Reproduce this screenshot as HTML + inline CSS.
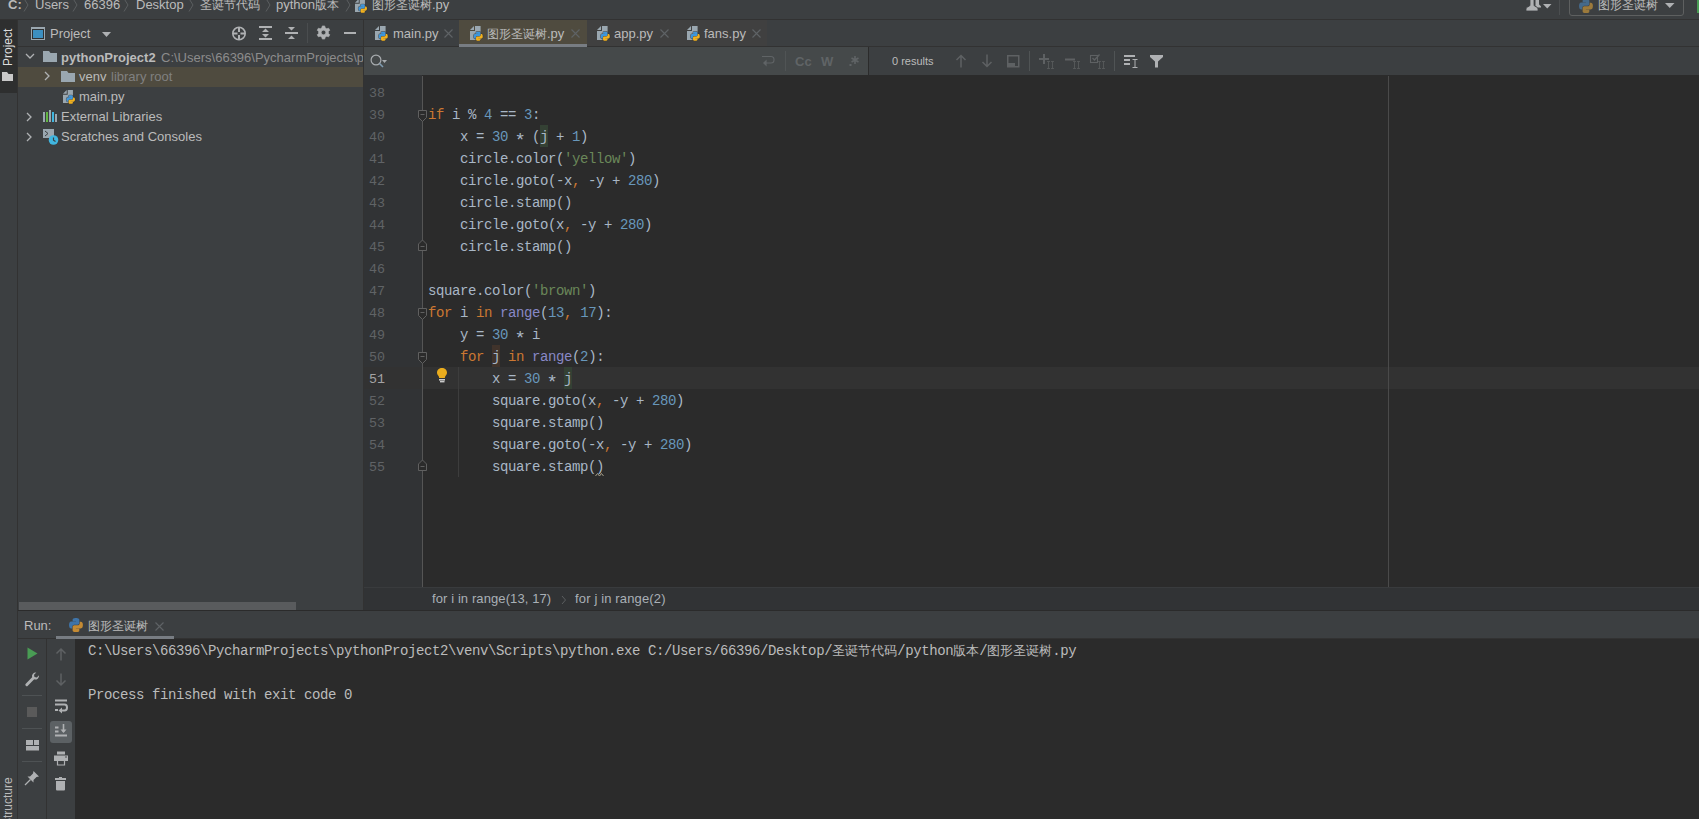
<!DOCTYPE html>
<html><head><meta charset="utf-8">
<style>
*{margin:0;padding:0;box-sizing:border-box}
html,body{width:1699px;height:819px;overflow:hidden;background:#3C3F41}
body{position:relative;font-family:"Liberation Sans",sans-serif;font-size:13px;color:#BBBBBB}
.a{position:absolute}
.t{position:absolute;white-space:nowrap;line-height:16px}
.mono{font-family:"Liberation Mono",monospace;font-size:13.333px}
.bd{background:#323232}
svg{position:absolute;overflow:visible}
/* code */
.ln{position:absolute;left:369px;width:16px;padding-top:2px;font-size:13.333px!important;letter-spacing:0;text-align:right;color:#606366;line-height:22px;height:22px}
.cl{position:absolute;left:428px;padding-top:1px;font-size:14px!important;letter-spacing:-0.4px;color:#A9B7C6;line-height:22px;height:22px;white-space:pre}
.k{color:#CC7832}.b{color:#8888C6}.hw{background:#344134}.hr{background:#40332B}.n{color:#6897BB}.s{color:#6A8759}
.cj{font-size:12px}
.ast{display:inline-block;width:8px;text-align:center;transform:translateY(3.5px) scale(1.35)}
</style></head><body>
<svg width="0" height="0" style="position:absolute">
<defs>
<symbol id="pyfile" viewBox="0 0 16 16">
<path d="M0 5L4 1V5Z" fill="#9AA7B0"/>
<path d="M5 1H10.6V15H0V6H5Z" fill="#9AA7B0"/>
<svg x="3" y="6" width="10.5" height="10.5" viewBox="-8 -8 127 127"><path d="M54.9 0C50.3 0 45.9.4 42.1 1.1 30.8 3.1 28.8 7.3 28.8 15V25.2H55.4V28.6H18.8C11.1 28.6 4.3 33.2 2.2 42-.2 52.1-.3 58.4 2.2 68.9 4.1 76.8 8.6 82.4 16.3 82.4H25.5V70.2C25.5 61.4 33.1 53.6 42.1 53.6H68.6C76 53.6 81.9 47.5 81.9 40.1V15C81.9 7.9 75.8 2.5 68.6 1.1 64 .4 59.3 0 54.9 0Z" fill="#333" stroke="#333" stroke-width="16" opacity="0.6"/><path d="M54.9 0C50.3 0 45.9.4 42.1 1.1 30.8 3.1 28.8 7.3 28.8 15V25.2H55.4V28.6H18.8C11.1 28.6 4.3 33.2 2.2 42-.2 52.1-.3 58.4 2.2 68.9 4.1 76.8 8.6 82.4 16.3 82.4H25.5V70.2C25.5 61.4 33.1 53.6 42.1 53.6H68.6C76 53.6 81.9 47.5 81.9 40.1V15C81.9 7.9 75.8 2.5 68.6 1.1 64 .4 59.3 0 54.9 0Z" transform="rotate(180 55.3 55.6)" fill="#333" stroke="#333" stroke-width="16" opacity="0.6"/><path d="M54.9 0C50.3 0 45.9.4 42.1 1.1 30.8 3.1 28.8 7.3 28.8 15V25.2H55.4V28.6H18.8C11.1 28.6 4.3 33.2 2.2 42-.2 52.1-.3 58.4 2.2 68.9 4.1 76.8 8.6 82.4 16.3 82.4H25.5V70.2C25.5 61.4 33.1 53.6 42.1 53.6H68.6C76 53.6 81.9 47.5 81.9 40.1V15C81.9 7.9 75.8 2.5 68.6 1.1 64 .4 59.3 0 54.9 0Z" fill="#3E96DB"/><path d="M54.9 0C50.3 0 45.9.4 42.1 1.1 30.8 3.1 28.8 7.3 28.8 15V25.2H55.4V28.6H18.8C11.1 28.6 4.3 33.2 2.2 42-.2 52.1-.3 58.4 2.2 68.9 4.1 76.8 8.6 82.4 16.3 82.4H25.5V70.2C25.5 61.4 33.1 53.6 42.1 53.6H68.6C76 53.6 81.9 47.5 81.9 40.1V15C81.9 7.9 75.8 2.5 68.6 1.1 64 .4 59.3 0 54.9 0Z" transform="rotate(180 55.3 55.6)" fill="#F2B11C"/></svg>
</symbol>
<symbol id="pylogo2" viewBox="-8 -8 127 127"><path d="M54.9 0C50.3 0 45.9.4 42.1 1.1 30.8 3.1 28.8 7.3 28.8 15V25.2H55.4V28.6H18.8C11.1 28.6 4.3 33.2 2.2 42-.2 52.1-.3 58.4 2.2 68.9 4.1 76.8 8.6 82.4 16.3 82.4H25.5V70.2C25.5 61.4 33.1 53.6 42.1 53.6H68.6C76 53.6 81.9 47.5 81.9 40.1V15C81.9 7.9 75.8 2.5 68.6 1.1 64 .4 59.3 0 54.9 0Z" fill="#456A8C"/><path d="M54.9 0C50.3 0 45.9.4 42.1 1.1 30.8 3.1 28.8 7.3 28.8 15V25.2H55.4V28.6H18.8C11.1 28.6 4.3 33.2 2.2 42-.2 52.1-.3 58.4 2.2 68.9 4.1 76.8 8.6 82.4 16.3 82.4H25.5V70.2C25.5 61.4 33.1 53.6 42.1 53.6H68.6C76 53.6 81.9 47.5 81.9 40.1V15C81.9 7.9 75.8 2.5 68.6 1.1 64 .4 59.3 0 54.9 0Z" transform="rotate(180 55.3 55.6)" fill="#9C7A3C"/></symbol>
<symbol id="pylogo3" viewBox="-8 -8 127 127"><path d="M54.9 0C50.3 0 45.9.4 42.1 1.1 30.8 3.1 28.8 7.3 28.8 15V25.2H55.4V28.6H18.8C11.1 28.6 4.3 33.2 2.2 42-.2 52.1-.3 58.4 2.2 68.9 4.1 76.8 8.6 82.4 16.3 82.4H25.5V70.2C25.5 61.4 33.1 53.6 42.1 53.6H68.6C76 53.6 81.9 47.5 81.9 40.1V15C81.9 7.9 75.8 2.5 68.6 1.1 64 .4 59.3 0 54.9 0Z" fill="#3F74A8"/><path d="M54.9 0C50.3 0 45.9.4 42.1 1.1 30.8 3.1 28.8 7.3 28.8 15V25.2H55.4V28.6H18.8C11.1 28.6 4.3 33.2 2.2 42-.2 52.1-.3 58.4 2.2 68.9 4.1 76.8 8.6 82.4 16.3 82.4H25.5V70.2C25.5 61.4 33.1 53.6 42.1 53.6H68.6C76 53.6 81.9 47.5 81.9 40.1V15C81.9 7.9 75.8 2.5 68.6 1.1 64 .4 59.3 0 54.9 0Z" transform="rotate(180 55.3 55.6)" fill="#C48A33"/></symbol>
</defs>
</svg>

<!-- ================= TOP NAV BAR ================= -->
<div class="a" style="left:0;top:0;width:1699px;height:19px;background:#3C3F41"></div>
<div class="a bd" style="left:0;top:19px;width:1699px;height:1px"></div>
<div class="t" style="left:8px;top:-3px;font-weight:bold">C:</div>
<div class="t" style="left:35px;top:-3px">Users</div>
<div class="t" style="left:84px;top:-3px">66396</div>
<div class="t" style="left:136px;top:-3px">Desktop</div>
<div class="t" style="left:200px;top:-3px;font-size:12px"><span class="cj">圣诞节代码</span></div>
<div class="t" style="left:276px;top:-3px">python<span class="cj">版本</span></div>
<svg style="left:355px;top:-2px" width="15" height="15"><use href="#pyfile"/></svg>
<div class="t" style="left:372px;top:-3px"><span class="cj">图形圣诞树</span>.py</div>

<svg style="left:23px;top:0px" width="7" height="13"><path d="M1 -1.5L5 5L1 11.5" fill="none" stroke="#5B5E60" stroke-width="1"/></svg>
<svg style="left:72px;top:0px" width="7" height="13"><path d="M1 -1.5L5 5L1 11.5" fill="none" stroke="#5B5E60" stroke-width="1"/></svg>
<svg style="left:123px;top:0px" width="7" height="13"><path d="M1 -1.5L5 5L1 11.5" fill="none" stroke="#5B5E60" stroke-width="1"/></svg>
<svg style="left:188px;top:0px" width="7" height="13"><path d="M1 -1.5L5 5L1 11.5" fill="none" stroke="#5B5E60" stroke-width="1"/></svg>
<svg style="left:265px;top:0px" width="7" height="13"><path d="M1 -1.5L5 5L1 11.5" fill="none" stroke="#5B5E60" stroke-width="1"/></svg>
<svg style="left:345px;top:0px" width="7" height="13"><path d="M1 -1.5L5 5L1 11.5" fill="none" stroke="#5B5E60" stroke-width="1"/></svg>
<svg style="left:1525px;top:0px" width="16" height="11"><path d="M9.5 0H14V3.5Q14 4.5 14.5 5L15.5 5.8Q16 6.3 16 7V7.6H12.5L10.5 6V0Z" fill="#AFB1B3"/><path d="M5 -2H9V4.5Q9 5.5 9.5 6L12 7.3Q13 7.8 13 9V11H1V9Q1 7.8 2 7.3L4.5 6Q5 5.5 5 4.5Z" fill="#AFB1B3" stroke="#3C3F41" stroke-width="0.8"/></svg>
<svg style="left:1543px;top:4px" width="9" height="5"><path d="M0 0H8.5L4.25 4.5Z" fill="#AFB1B3"/></svg>
<div class="a" style="left:1559px;top:0;width:1px;height:15px;background:#4B4E50"></div>
<div class="a" style="left:1569px;top:-6px;width:115px;height:22px;border:1px solid #5E6060;border-radius:3px"></div>
<svg style="left:1578px;top:-2px" width="16" height="16"><use href="#pylogo2"/></svg>
<div class="t" style="left:1598px;top:-3px"><span class="cj">图形圣诞树</span></div>
<svg style="left:1665px;top:3px" width="10" height="6"><path d="M0 0H9.5L4.75 5Z" fill="#AFB1B3"/></svg>
<div class="a" style="left:1697px;top:0;width:2px;height:13px;background:#499C54"></div>
<!-- ================= LEFT STRIPE ================= -->
<div class="a" style="left:0;top:20px;width:17px;height:799px;background:#3C3F41"></div>
<div class="a bd" style="left:17px;top:20px;width:1px;height:799px"></div>
<div class="a" style="left:0;top:20px;width:17px;height:73px;background:#2E2F2F"></div>
<div class="t" style="left:0px;top:66px;transform-origin:0 0;transform:rotate(-90deg);font-size:12px;color:#DDDDDD">Project</div>
<svg style="left:2px;top:72px" width="12" height="10"><path d="M0 0H5L6.5 2H11V9H0Z" fill="#C9C9C9"/></svg>
<div class="t" style="left:0px;top:826px;transform-origin:0 0;transform:rotate(-90deg);font-size:12px">Structure</div>

<!-- ================= PROJECT PANEL ================= -->
<div class="a" style="left:18px;top:20px;width:345px;height:26px;background:#3C3F41"></div>
<div class="a bd" style="left:18px;top:46px;width:345px;height:1px"></div>
<svg style="left:31px;top:27px" width="14" height="13"><rect x="0" y="0" width="14" height="13" fill="#9AA7B0"/><rect x="1" y="2" width="12" height="10" fill="#2F3132"/><rect x="2" y="3" width="10" height="8" fill="#3C8FC0"/></svg>
<div class="t" style="left:50px;top:26px">Project</div>
<svg style="left:102px;top:32px" width="9" height="5"><path d="M0 0H9L4.5 5Z" fill="#AFB1B3"/></svg>
<svg style="left:231px;top:26px" width="16" height="15" viewBox="0 0 16 15"><circle cx="8" cy="7.5" r="6.2" fill="none" stroke="#AFB1B3" stroke-width="1.6"/><path d="M8 1.5V6M8 9V13.5M2 7.5H6.5M9.5 7.5H14" stroke="#AFB1B3" stroke-width="2"/></svg>
<svg style="left:259px;top:26px" width="13" height="14"><rect x="0" y="0" width="13" height="2" fill="#AFB1B3"/><rect x="0" y="12" width="13" height="2" fill="#AFB1B3"/><path d="M3 6H10L6.5 2.5Z M3 8H10L6.5 11.5Z" fill="#AFB1B3"/></svg>
<svg style="left:285px;top:26px" width="13" height="14"><rect x="0" y="6" width="13" height="2" fill="#AFB1B3"/><path d="M3 1H10L6.5 4.5Z M3 13H10L6.5 9.5Z" fill="#AFB1B3"/></svg>
<div class="a" style="left:307px;top:23px;width:1px;height:20px;background:#4A4D4F"></div>
<svg style="left:317px;top:26px" width="13" height="13"><path fill="#AFB1B3" fill-rule="evenodd" stroke="#AFB1B3" stroke-width="0.6" stroke-linejoin="round" d="M5.31 -0.09 L7.69 -0.09 L8.19 1.80 L9.73 2.68 L11.62 2.18 L12.80 4.23 L11.42 5.61 L11.42 7.39 L12.80 8.77 L11.62 10.82 L9.73 10.32 L8.19 11.20 L7.69 13.09 L5.31 13.09 L4.81 11.20 L3.27 10.32 L1.38 10.82 L0.20 8.77 L1.58 7.39 L1.58 5.61 L0.20 4.23 L1.38 2.18 L3.27 2.68 L4.81 1.80Z M6.5 4.2 A2.3 2.3 0 1 0 6.5 8.8 A2.3 2.3 0 1 0 6.5 4.2Z"/></svg>
<div class="a" style="left:344px;top:32px;width:12px;height:2px;background:#AFB1B3"></div>

<!-- tree -->
<div class="a" style="left:18px;top:67px;width:345px;height:20px;background:#4F4B3F"></div>
<svg style="left:25px;top:53px" width="10" height="7"><path d="M1 1L5 5L9 1" fill="none" stroke="#AFB1B3" stroke-width="1.3"/></svg>
<svg style="left:43px;top:51px" width="15" height="12"><path d="M0 0H6L7.5 2H14V11H0Z" fill="#9AA7B0"/></svg>
<div class="t" style="left:61px;top:50px;font-weight:bold;color:#BBBBBB">pythonProject2</div>
<div class="t" style="left:161px;top:50px;color:#8C8C8C">C:\Users\66396\PycharmProjects\pythonProject2</div>
<svg style="left:44px;top:71px" width="7" height="10"><path d="M1 1L5 5L1 9" fill="none" stroke="#AFB1B3" stroke-width="1.3"/></svg>
<svg style="left:61px;top:71px" width="15" height="12"><path d="M0 0H6L7.5 2H14V11H0Z" fill="#9AA7B0"/></svg>
<div class="t" style="left:79px;top:69px">venv</div>
<div class="t" style="left:111px;top:69px;color:#808080">library root</div>
<svg style="left:63px;top:89px" width="15" height="15"><use href="#pyfile"/></svg>
<div class="t" style="left:79px;top:89px">main.py</div>
<svg style="left:26px;top:112px" width="7" height="10"><path d="M1 1L5 5L1 9" fill="none" stroke="#AFB1B3" stroke-width="1.3"/></svg>
<svg style="left:43px;top:110px" width="15" height="13"><rect x="0" y="2" width="2" height="10" fill="#9AA7B0"/><rect x="3" y="2" width="2" height="10" fill="#62B543"/><rect x="6" y="0" width="2" height="12" fill="#9AA7B0"/><rect x="9" y="2" width="2" height="10" fill="#40B6E0"/><rect x="12" y="4" width="2" height="8" fill="#9AA7B0"/></svg>
<div class="t" style="left:61px;top:109px">External Libraries</div>
<svg style="left:26px;top:132px" width="7" height="10"><path d="M1 1L5 5L1 9" fill="none" stroke="#AFB1B3" stroke-width="1.3"/></svg>
<svg style="left:43px;top:129px" width="16" height="16"><rect x="0" y="0" width="11" height="9" fill="#9AA7B0"/><path d="M2 2L5 4.5L2 7" fill="none" stroke="#3C3F41" stroke-width="1"/><circle cx="10.5" cy="11" r="4.8" fill="#40B6E0"/><path d="M10.5 8.5V11.2L12.5 12.5" fill="none" stroke="#3C3F41" stroke-width="1.2"/></svg>
<div class="t" style="left:61px;top:129px">Scratches and Consoles</div>
<!-- project h scrollbar -->
<div class="a" style="left:19px;top:602px;width:277px;height:8px;background:#595B5D"></div>

<!-- ================= EDITOR ================= -->
<div class="a bd" style="left:363px;top:20px;width:1px;height:591px"></div>
<div class="a bd" style="left:364px;top:46px;width:1335px;height:1px"></div>
<div class="a" style="left:364px;top:47px;width:504px;height:28px;background:#45494A"></div>
<div class="a" style="left:364px;top:75px;width:58px;height:512px;background:#313335"></div>
<div class="a" style="left:422px;top:75px;width:1277px;height:512px;background:#2B2B2B"></div>
<div class="a" style="left:364px;top:587px;width:1335px;height:23px;background:#313335"></div>

<!-- tabs -->
<div class="a" style="left:459px;top:20px;width:128px;height:26px;background:#4F4B3F"></div>
<div class="a" style="left:587px;top:20px;width:180px;height:26px;background:#404040"></div>
<div class="a" style="left:459px;top:44px;width:128px;height:3px;background:#787D83"></div>
<svg style="left:375px;top:25px" width="16" height="16"><use href="#pyfile"/></svg>
<div class="t" style="left:393px;top:26px">main.py</div>
<svg style="left:444px;top:29px" width="9" height="9"><path d="M0.5 0.5L8.5 8.5M8.5 0.5L0.5 8.5" stroke="#5F6366" stroke-width="1.1"/></svg>
<svg style="left:470px;top:25px" width="16" height="16"><use href="#pyfile"/></svg>
<div class="t" style="left:487px;top:26px"><span class="cj">图形圣诞树</span>.py</div>
<svg style="left:571px;top:29px" width="9" height="9"><path d="M0.5 0.5L8.5 8.5M8.5 0.5L0.5 8.5" stroke="#5F6366" stroke-width="1.1"/></svg>
<svg style="left:597px;top:25px" width="16" height="16"><use href="#pyfile"/></svg>
<div class="t" style="left:614px;top:26px">app.py</div>
<svg style="left:660px;top:29px" width="9" height="9"><path d="M0.5 0.5L8.5 8.5M8.5 0.5L0.5 8.5" stroke="#5F6366" stroke-width="1.1"/></svg>
<svg style="left:687px;top:25px" width="16" height="16"><use href="#pyfile"/></svg>
<div class="t" style="left:704px;top:26px">fans.py</div>
<svg style="left:752px;top:29px" width="9" height="9"><path d="M0.5 0.5L8.5 8.5M8.5 0.5L0.5 8.5" stroke="#5F6366" stroke-width="1.1"/></svg>
<!-- find bar -->
<div class="a" style="left:868px;top:47px;width:1px;height:28px;background:#2B2B2B"></div>
<svg style="left:370px;top:54px" width="20" height="15"><circle cx="6" cy="6" r="4.9" fill="none" stroke="#A8ACAF" stroke-width="1.2"/><path d="M9.5 9.5L13 13" stroke="#7F9BB0" stroke-width="1.6"/><path d="M12 6H17L14.5 9Z" fill="#A8ACAF"/></svg>
<svg style="left:762px;top:55px" width="14" height="13"><path d="M0 1.5H9Q12 1.5 12 4.7Q12 8 9 8H3.5" fill="none" stroke="#606466" stroke-width="1.1"/><path d="M1 8L4.6 4.6V11.4Z" fill="#606466"/></svg>
<div class="a" style="left:785px;top:51px;width:1px;height:20px;background:#505455"></div>
<div class="t" style="left:795px;top:54px;font-weight:bold;font-size:13px;color:#606466">Cc</div>
<div class="t" style="left:821px;top:54px;font-weight:bold;font-size:13px;color:#606466">W</div>
<svg style="left:848px;top:54px" width="13" height="14"><rect x="1.5" y="10" width="2" height="2" fill="#606466"/><path d="M7 2V10M3.5 4L10.5 8M10.5 4L3.5 8" stroke="#606466" stroke-width="1.6"/></svg>
<div class="t" style="left:892px;top:53px;font-size:11px;color:#BBBBBB">0 results</div>
<svg style="left:955px;top:54px" width="12" height="14"><path d="M6 1.5V13.5M1.5 6L6 1.5L10.5 6" fill="none" stroke="#5E6163" stroke-width="1.5"/></svg>
<svg style="left:981px;top:54px" width="12" height="14"><path d="M6 0.5V12.5M1.5 8L6 12.5L10.5 8" fill="none" stroke="#5E6163" stroke-width="1.5"/></svg>
<svg style="left:1007px;top:55px" width="13" height="13"><rect x="0.75" y="0.75" width="11" height="11" fill="none" stroke="#5E6163" stroke-width="1.5"/><rect x="1" y="8" width="7" height="3.5" fill="#5E6163"/></svg>
<div class="a" style="left:1029px;top:51px;width:1px;height:20px;background:#505455"></div>
<svg style="left:1039px;top:53px" width="16" height="16"><path d="M5 1V11M0 6H10" stroke="#5E6163" stroke-width="2"/><path d="M8 8.5H11M8 15.5H11M9.5 8.5V15.5M12 8.5H15M12 15.5H15M13.5 8.5V15.5" stroke="#5E6163" stroke-width="0.7"/></svg>
<svg style="left:1065px;top:53px" width="16" height="16"><path d="M0 6.5H10" stroke="#5E6163" stroke-width="2"/><path d="M8 8.5H11M8 15.5H11M9.5 8.5V15.5M12 8.5H15M12 15.5H15M13.5 8.5V15.5" stroke="#5E6163" stroke-width="0.7"/></svg>
<svg style="left:1090px;top:53px" width="16" height="16"><rect x="0.5" y="2.5" width="7" height="7" fill="none" stroke="#5E6163" stroke-width="1.1"/><path d="M2.5 5L4.5 7L9.5 1.5" fill="none" stroke="#5E6163" stroke-width="1.3"/><path d="M8 8.5H11M8 15.5H11M9.5 8.5V15.5M12 8.5H15M12 15.5H15M13.5 8.5V15.5" stroke="#5E6163" stroke-width="0.7"/></svg>
<div class="a" style="left:1114px;top:51px;width:1px;height:20px;background:#505455"></div>
<svg style="left:1124px;top:55px" width="15" height="13"><rect x="0" y="0" width="11" height="2" fill="#AFB1B3"/><rect x="0" y="4" width="6" height="2" fill="#AFB1B3"/><rect x="0" y="8" width="6" height="2" fill="#AFB1B3"/><path d="M8.5 4.5H13.5M8.5 12.5H13.5M11 4.5V12.5" stroke="#AFB1B3" stroke-width="1"/></svg>
<svg style="left:1150px;top:55px" width="14" height="13"><path d="M0 0H13V2L8 6.5V12.5H5V6.5L0 2Z" fill="#AFB1B3"/></svg>
<!-- code -->
<div class="a" style="left:364px;top:367px;width:1335px;height:22px;background:#323232"></div>
<div class="a" style="left:540px;top:125px;width:8px;height:22px;background:#344134"></div>
<div class="a" style="left:492px;top:345px;width:8px;height:22px;background:#40332B"></div>
<div class="a" style="left:564px;top:367px;width:8px;height:22px;background:#344134"></div>

<div class="a" style="left:1388px;top:76px;width:1px;height:511px;background:#4A4A4A"></div>
<div class="a" style="left:422px;top:76px;width:1px;height:511px;background:#555555"></div>
<div class="a" style="left:458px;top:367px;width:1px;height:110px;background:#3D3D3D"></div>
<div class="ln mono" style="top:81px;color:#606366">38</div>
<div class="ln mono" style="top:103px;color:#606366">39</div>
<div class="cl mono" style="top:103px"><span class="k">if</span> i % <span class="n">4</span> == <span class="n">3</span>:</div>
<div class="ln mono" style="top:125px;color:#606366">40</div>
<div class="cl mono" style="top:125px">    x = <span class="n">30</span> <span class="ast">*</span> (j + <span class="n">1</span>)</div>
<div class="ln mono" style="top:147px;color:#606366">41</div>
<div class="cl mono" style="top:147px">    circle.color(<span class="s">'yellow'</span>)</div>
<div class="ln mono" style="top:169px;color:#606366">42</div>
<div class="cl mono" style="top:169px">    circle.goto(-x<span class="k">,</span> -y + <span class="n">280</span>)</div>
<div class="ln mono" style="top:191px;color:#606366">43</div>
<div class="cl mono" style="top:191px">    circle.stamp()</div>
<div class="ln mono" style="top:213px;color:#606366">44</div>
<div class="cl mono" style="top:213px">    circle.goto(x<span class="k">,</span> -y + <span class="n">280</span>)</div>
<div class="ln mono" style="top:235px;color:#606366">45</div>
<div class="cl mono" style="top:235px">    circle.stamp()</div>
<div class="ln mono" style="top:257px;color:#606366">46</div>
<div class="ln mono" style="top:279px;color:#606366">47</div>
<div class="cl mono" style="top:279px">square.color(<span class="s">'brown'</span>)</div>
<div class="ln mono" style="top:301px;color:#606366">48</div>
<div class="cl mono" style="top:301px"><span class="k">for</span> i <span class="k">in</span> <span class="b">range</span>(<span class="n">13</span><span class="k">,</span> <span class="n">17</span>):</div>
<div class="ln mono" style="top:323px;color:#606366">49</div>
<div class="cl mono" style="top:323px">    y = <span class="n">30</span> <span class="ast">*</span> i</div>
<div class="ln mono" style="top:345px;color:#606366">50</div>
<div class="cl mono" style="top:345px">    <span class="k">for</span> j <span class="k">in</span> <span class="b">range</span>(<span class="n">2</span>):</div>
<div class="ln mono" style="top:367px;color:#A4A3A3">51</div>
<div class="cl mono" style="top:367px">        x = <span class="n">30</span> <span class="ast">*</span> j</div>
<div class="ln mono" style="top:389px;color:#606366">52</div>
<div class="cl mono" style="top:389px">        square.goto(x<span class="k">,</span> -y + <span class="n">280</span>)</div>
<div class="ln mono" style="top:411px;color:#606366">53</div>
<div class="cl mono" style="top:411px">        square.stamp()</div>
<div class="ln mono" style="top:433px;color:#606366">54</div>
<div class="cl mono" style="top:433px">        square.goto(-x<span class="k">,</span> -y + <span class="n">280</span>)</div>
<div class="ln mono" style="top:455px;color:#606366">55</div>
<div class="cl mono" style="top:455px">        square.stamp()</div>
<svg style="left:0;top:0" width="1" height="1"><path d="M418.5 110.5H426.5V117.5L422.5 121.5L418.5 117.5Z" fill="#2B2B2B" stroke="#606060" stroke-width="1"/><path d="M420.5 114.5H424.5" stroke="#606060" stroke-width="1"/></svg>
<svg style="left:0;top:0" width="1" height="1"><path d="M418.5 250.5V244L422.5 240L426.5 244V250.5Z" fill="#2B2B2B" stroke="#606060" stroke-width="1"/><path d="M420.5 246.5H424.5" stroke="#606060" stroke-width="1"/></svg>
<svg style="left:0;top:0" width="1" height="1"><path d="M418.5 308.5H426.5V315.5L422.5 319.5L418.5 315.5Z" fill="#2B2B2B" stroke="#606060" stroke-width="1"/><path d="M420.5 312.5H424.5" stroke="#606060" stroke-width="1"/></svg>
<svg style="left:0;top:0" width="1" height="1"><path d="M418.5 352.5H426.5V359.5L422.5 363.5L418.5 359.5Z" fill="#2B2B2B" stroke="#606060" stroke-width="1"/><path d="M420.5 356.5H424.5" stroke="#606060" stroke-width="1"/></svg>
<svg style="left:0;top:0" width="1" height="1"><path d="M418.5 470.5V464L422.5 460L426.5 464V470.5Z" fill="#2B2B2B" stroke="#606060" stroke-width="1"/><path d="M420.5 466.5H424.5" stroke="#606060" stroke-width="1"/></svg>
<svg style="left:436px;top:367px" width="12" height="16"><path d="M6 1C3.2 1 1 3 1 5.6C1 7.4 2 8.4 2.8 9.4L3.2 11H8.8L9.2 9.4C10 8.4 11 7.4 11 5.6C11 3 8.8 1 6 1Z" fill="#EAAC1D"/><rect x="3" y="12" width="6" height="1.6" fill="#C9C9C9"/><rect x="4" y="14" width="4.5" height="1.4" fill="#C9C9C9"/></svg>
<svg style="left:595px;top:472px" width="10" height="5"><path d="M0.5 4L2.5 1.5L4.5 4L6.5 1.5L8.5 4" fill="none" stroke="#A49F8B" stroke-width="1"/></svg>
<!-- ================= BREADCRUMBS ================= -->
<div class="a" style="left:364px;top:587px;width:1335px;height:1px;background:#393B3D"></div>
<div class="t" style="left:432px;top:591px;color:#A9B0B6;letter-spacing:0.1px">for i in range(13, 17)</div>
<svg style="left:561px;top:595px" width="6" height="10"><path d="M1 1L4.5 5L1 9" fill="none" stroke="#5B5E60" stroke-width="1"/></svg>
<div class="t" style="left:575px;top:591px;color:#A9B0B6;letter-spacing:0.15px">for j in range(2)</div>

<!-- ================= RUN PANEL ================= -->
<div class="a" style="left:18px;top:610px;width:1681px;height:1px;background:#2B2B2B"></div>
<div class="t" style="left:24px;top:618px">Run:</div>
<svg style="left:68px;top:617px" width="16" height="16"><use href="#pylogo3"/></svg>
<div class="t" style="left:88px;top:618px"><span class="cj">图形圣诞树</span></div>
<svg style="left:155px;top:622px" width="9" height="9"><path d="M0.5 0.5L8.5 8.5M8.5 0.5L0.5 8.5" stroke="#5F6366" stroke-width="1.1"/></svg>
<div class="a" style="left:56px;top:636px;width:118px;height:3px;background:#787D83"></div>
<div class="a bd" style="left:18px;top:638px;width:38px;height:1px"></div>
<div class="a bd" style="left:174px;top:638px;width:1525px;height:1px"></div>
<div class="a bd" style="left:46px;top:639px;width:1px;height:180px"></div>
<div class="a" style="left:75px;top:639px;width:1624px;height:180px;background:#2B2B2B"></div>
<!-- col1 icons -->
<svg style="left:27px;top:647px" width="11" height="13"><path d="M0.5 0.5L10.5 6.5L0.5 12.5Z" fill="#499C54"/></svg>
<svg style="left:25px;top:672px" width="15" height="15" viewBox="0 0 16 16"><path d="M11.5 0.5A4 4 0 0 0 7.6 5.6L0.8 12.4A1.5 1.5 0 0 0 3 14.6L9.8 7.8A4 4 0 0 0 15 3.5L12.6 5.9L10.1 5.4L9.6 2.9L12 0.5Z" fill="#AFB1B3"/></svg>
<div class="a" style="left:22px;top:695px;width:20px;height:1px;background:#4E5254"></div>
<div class="a" style="left:27px;top:707px;width:10px;height:10px;background:#5A5A5A"></div>
<div class="a" style="left:22px;top:728px;width:20px;height:1px;background:#4E5254"></div>
<svg style="left:26px;top:740px" width="13" height="11"><rect x="0" y="0" width="7" height="5" fill="#AFB1B3"/><rect x="8" y="0" width="5" height="5" fill="#AFB1B3"/><rect x="0" y="6" width="13" height="4.5" fill="#AFB1B3"/></svg>
<div class="a" style="left:22px;top:761px;width:20px;height:1px;background:#4E5254"></div>
<svg style="left:24px;top:770px" width="16" height="16" viewBox="0 0 16 16"><path d="M9.5 1L15 6.5L12.5 7L9.5 10L9.5 12.5L3.5 6.5L6 6.5L9 3.5Z" fill="#AFB1B3"/><path d="M6.5 9.5L1 15" stroke="#AFB1B3" stroke-width="1.3"/></svg>
<!-- col2 icons -->
<svg style="left:55px;top:647px" width="12" height="14"><path d="M6 2V13.5M1.5 6.5L6 2L10.5 6.5" fill="none" stroke="#5E6163" stroke-width="1.5"/></svg>
<svg style="left:55px;top:673px" width="12" height="14"><path d="M6 0.5V12M1.5 7.5L6 12L10.5 7.5" fill="none" stroke="#5E6163" stroke-width="1.5"/></svg>
<svg style="left:54px;top:699px" width="15" height="15"><rect x="1" y="0.5" width="12" height="2" fill="#AFB1B3"/><path d="M1 5.5H10.5Q13 5.5 13 8.5Q13 11.5 10.5 11.5H7" fill="none" stroke="#AFB1B3" stroke-width="2"/><path d="M4.5 11.5L8 8.5V14.5Z" fill="#AFB1B3"/><rect x="1" y="10" width="3" height="2" fill="#AFB1B3"/></svg>
<div class="a" style="left:50px;top:721px;width:22px;height:22px;background:#5C6164;border-radius:3px"></div>
<svg style="left:55px;top:724px" width="13" height="14"><rect x="0" y="2.5" width="3.5" height="2" fill="#AFB1B3"/><rect x="0" y="6.5" width="3.5" height="2" fill="#AFB1B3"/><rect x="0" y="10.5" width="12" height="2" fill="#AFB1B3"/><path d="M8.5 0V8" stroke="#AFB1B3" stroke-width="1.6"/><path d="M5.5 5.5H11.5L8.5 9Z" fill="#AFB1B3"/></svg>
<svg style="left:54px;top:751px" width="15" height="15"><rect x="3" y="0.5" width="8" height="3" fill="#AFB1B3"/><rect x="0" y="4.5" width="14" height="5.5" fill="#AFB1B3"/><circle cx="12" cy="6" r="0.8" fill="#3C3F41"/><path d="M3.5 9V14H10.5V9" fill="none" stroke="#AFB1B3" stroke-width="1.2"/></svg>
<svg style="left:55px;top:777px" width="12" height="14"><rect x="0" y="1" width="11" height="2" fill="#AFB1B3"/><rect x="4" y="0" width="3" height="2" fill="#AFB1B3"/><path d="M1 4H10V12.5Q10 13.5 9 13.5H2Q1 13.5 1 12.5Z" fill="#AFB1B3"/></svg>
<div class="t mono" style="left:88px;top:643px;line-height:16px;color:#BBBBBB;font-size:14px;letter-spacing:-0.4px">C:\Users\66396\PycharmProjects\pythonProject2\venv\Scripts\python.exe C:/Users/66396/Desktop/<span style="font-size:13.333px;letter-spacing:0">圣诞节代码</span>/python<span style="font-size:13.333px;letter-spacing:0">版本</span>/<span style="font-size:13.333px;letter-spacing:0">图形圣诞树</span>.py</div>
<div class="t mono" style="left:88px;top:687px;line-height:16px;color:#BBBBBB;font-size:14px;letter-spacing:-0.4px">Process finished with exit code 0</div>
</body></html>
